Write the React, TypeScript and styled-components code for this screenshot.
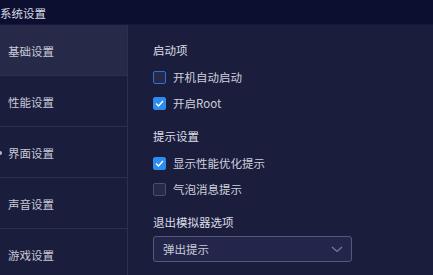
import React, { useState } from 'react'
import styled, { createGlobalStyle } from 'styled-components'

const GlobalStyle = createGlobalStyle`
  html, body {
    margin: 0;
    padding: 0;
    background: #1b1d3d;
    font-family: "Noto Sans CJK SC", "Noto Sans", sans-serif;
  }
`

const Window = styled.div`
  width: 433px;
  height: 275px;
  overflow: hidden;
  display: flex;
  flex-direction: column;
  background: #1b1d3d;
  color: #d4d6e0;
`

const TitleBar = styled.div`
  height: 25px;
  flex: none;
  display: flex;
  align-items: center;
  padding-top: 1px;
  background: #0c0f30;
  border-bottom: 1px solid #15183a;
  box-sizing: border-box;
  font-size: 11.5px;
  color: #d8dae4;
`

const Body = styled.div`
  flex: 1;
  display: flex;
  min-height: 0;
`

const Sidebar = styled.nav`
  width: 128px;
  flex: none;
  border-right: 1px solid #2c2f50;
  box-sizing: border-box;
  display: flex;
  flex-direction: column;
`

const NavItem = styled.div<{ $active?: boolean }>`
  position: relative;
  height: 51px;
  flex: none;
  display: flex;
  align-items: center;
  padding: 2px 0 0 8px;
  box-sizing: border-box;
  border-bottom: 1px solid #2c2f50;
  background: ${p => (p.$active ? '#262a48' : 'transparent')};
  font-size: 11.5px;
  color: #c8cad6;
`

const Dot = styled.span`
  position: absolute;
  left: -2px;
  top: 50%;
  width: 4px;
  height: 4px;
  margin-top: -1px;
  border-radius: 50%;
  background: #b8bac8;
`

const Content = styled.div`
  flex: 1;
  padding: 17px 0 0 25px;
  display: flex;
  flex-direction: column;
`

const Section = styled.div`
  margin-bottom: 12px;
`

const SectionTitle = styled.div`
  height: 16px;
  line-height: 16px;
  font-size: 11.5px;
  color: #dcdee8;
  margin-bottom: 6px;
`

const Row = styled.label`
  height: 26px;
  display: flex;
  align-items: center;
  gap: 7px;
  font-size: 11.5px;
  color: #cfd1dc;
  cursor: pointer;
`

const Box = styled.span<{ $checked: boolean; $focus?: boolean }>`
  width: 13px;
  height: 13px;
  box-sizing: border-box;
  border-radius: 2px;
  display: flex;
  align-items: center;
  justify-content: center;
  background: ${p => (p.$checked ? '#2d8cf0' : '#262947')};
  border: 1px solid
    ${p => (p.$checked ? '#2d8cf0' : p.$focus ? '#2d6fd4' : '#4b4e6a')};
`

const Select = styled.div`
  width: 199px;
  height: 26px;
  box-sizing: border-box;
  border: 1px solid #55587a;
  border-radius: 3px;
  background: #23264a;
  display: flex;
  align-items: center;
  justify-content: space-between;
  padding: 0 8px 0 9px;
  font-size: 11.5px;
  color: #c8cad6;
`

function Check({ label, checked, focus }: { label: string; checked: boolean; focus?: boolean }) {
  const [on, setOn] = useState(checked)
  return (
    <Row onClick={() => setOn(!on)}>
      <Box $checked={on} $focus={focus}>
        {on && (
          <svg width="9" height="7" viewBox="0 0 9 7">
            <path d="M1 3.5 L3.5 6 L8 1" fill="none" stroke="#fff" strokeWidth="1.3" />
          </svg>
        )}
      </Box>
      {label}
    </Row>
  )
}

const navItems = ['基础设置', '性能设置', '界面设置', '声音设置', '游戏设置']

export default function App() {
  return (
    <>
      <GlobalStyle />
      <Window>
        <TitleBar>系统设置</TitleBar>
        <Body>
          <Sidebar>
            {navItems.map((n, i) => (
              <NavItem key={n} $active={i === 0}>
                {i === 2 && <Dot />}
                {n}
              </NavItem>
            ))}
          </Sidebar>
          <Content>
            <Section>
              <SectionTitle>启动项</SectionTitle>
              <Check label="开机自动启动" checked={false} focus />
              <Check label="开启Root" checked />
            </Section>
            <Section>
              <SectionTitle>提示设置</SectionTitle>
              <Check label="显示性能优化提示" checked />
              <Check label="气泡消息提示" checked={false} />
            </Section>
            <SectionTitle>退出模拟器选项</SectionTitle>
            <Select>
              弹出提示
              <svg width="12" height="7" viewBox="0 0 12 7">
                <path d="M1 1 L6 5.5 L11 1" fill="none" stroke="#7a7d96" strokeWidth="1.2" />
              </svg>
            </Select>
          </Content>
        </Body>
      </Window>
    </>
  )
}
